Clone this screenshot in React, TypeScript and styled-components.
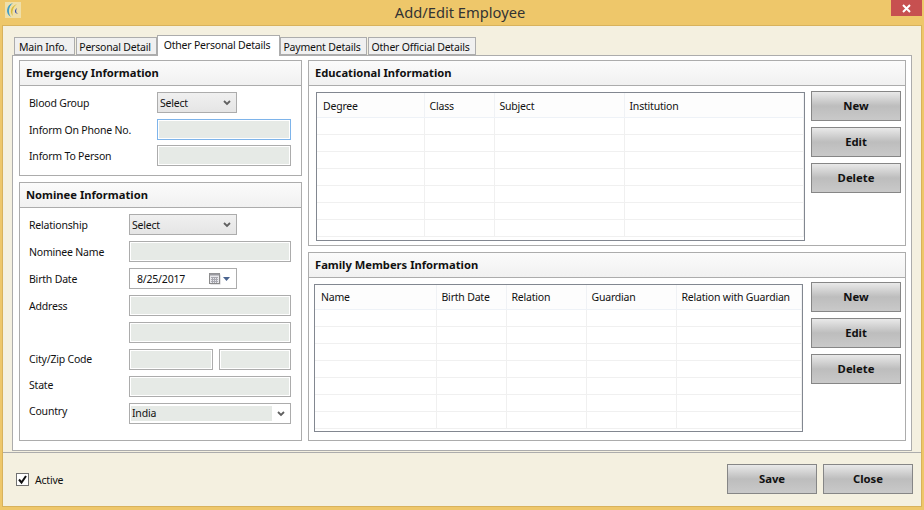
import * as React from 'react';
import styled, { createGlobalStyle } from 'styled-components';

const GlobalStyle = createGlobalStyle`
  html, body {
    margin: 0;
    padding: 0;
    background: #eec76a;
  }
  * {
    box-sizing: border-box;
  }
`;

const Window = styled.div`
  width: 924px;
  height: 510px;
  display: flex;
  flex-direction: column;
  overflow: hidden;
  background: #eec76a;
  font-family: 'Noto Sans', sans-serif;
  font-size: 10.5px;
  letter-spacing: -0.2px;
  color: #111;
`;
const TitleBar = styled.div`
  height: 25px;
  flex-shrink: 0;
  position: relative;
  display: flex;
  align-items: center;
  justify-content: center;
  font-size: 14.7px;
  letter-spacing: 0;
  color: #333;
  padding: 0 4px 1px 0;
`;
const AppIcon = styled.svg`
  position: absolute;
  left: 5px;
  top: 2px;
`;
const CloseBox = styled.div`
  position: absolute;
  left: 891px;
  top: 0;
  width: 31px;
  height: 16px;
  background: #c75050;
  display: flex;
  align-items: center;
  justify-content: center;
`;
const Body = styled.div`
  margin: 0 2px 3px 2px;
  flex: 1;
  border: 1px solid #d8b25c;
  background: #f4f0e0;
  display: flex;
  flex-direction: column;
  min-height: 0;
`;
const TabArea = styled.div`
  margin: 9px 9px 0 9px;
  height: 416px;
  display: flex;
  flex-direction: column;
`;
const TabStrip = styled.div`
  height: 21px;
  display: flex;
  align-items: flex-end;
  padding-left: 2px;
  gap: 1px;
`;
const Tab = styled.div<{ $active?: boolean; $width: number }>`
  width: ${(p) => p.$width}px;
  height: ${(p) => (p.$active ? 21 : 18)}px;
  border: 1px solid #acacac;
  background: ${(p) => (p.$active ? '#fff' : '#f0f0f0')};
  border-bottom: ${(p) => (p.$active ? 'none' : '1px solid #acacac')};
  margin: ${(p) => (p.$active ? '0 -1px -1px -1px' : '0')};
  position: relative;
  z-index: ${(p) => (p.$active ? 2 : 1)};
  display: flex;
  align-items: center;
  justify-content: center;
  padding: ${(p) => (p.$active ? '0 3px 2px 0' : '1px 3px 0 0')};
  white-space: nowrap;
`;
const TabPane = styled.div`
  flex: 1;
  border: 1px solid #acacac;
  background: #fff;
  padding: 4px 5px 9px 6px;
  display: flex;
  gap: 6px;
`;
const LeftColumn = styled.div`
  width: 283px;
  display: flex;
  flex-direction: column;
  gap: 6px;
`;
const RightColumn = styled.div`
  width: 598px;
  display: flex;
  flex-direction: column;
  gap: 6px;
`;
const Panel = styled.section<{ $height: number }>`
  height: ${(p) => p.$height}px;
  border: 1px solid #acacac;
  display: flex;
  flex-direction: column;
`;
const PanelHeader = styled.h2`
  margin: 0;
  height: 25px;
  flex-shrink: 0;
  border-bottom: 1px solid #acacac;
  background: linear-gradient(#fbfbfb, #f1f1f1);
  padding: 0 0 1px 6px;
  display: flex;
  align-items: center;
  font-size: 11.2px;
  letter-spacing: 0;
  font-weight: 700;
  color: #111;
`;
const Form = styled.div`
  padding: 6px 10px 0 9px;
  display: flex;
  flex-direction: column;
  gap: 6px;
`;
const FormRow = styled.div<{ $tight?: boolean }>`
  display: flex;
  height: 21px;
  align-items: center;
  margin-top: ${(p) => (p.$tight ? -1 : 0)}px;
`;
const Label = styled.label<{ $width: number; $raise?: number }>`
  width: ${(p) => p.$width}px;
  flex-shrink: 0;
  padding-bottom: ${(p) => p.$raise ?? 0}px;
`;
const TextField = styled.div<{ $width: number; $focused?: boolean; $gap?: number }>`
  width: ${(p) => p.$width}px;
  height: 21px;
  margin-left: ${(p) => p.$gap ?? 0}px;
  border: 1px solid ${(p) => (p.$focused ? '#7eb4ea' : '#acacac')};
  background: #e6eae6;
  box-shadow: inset 0 0 0 1px #fff;
`;
const SelectBox = styled.div<{ $width: number }>`
  width: ${(p) => p.$width}px;
  height: 21px;
  border: 1px solid #acacac;
  background: linear-gradient(#f0f0f0, #e5e5e5);
  display: flex;
  align-items: center;
  justify-content: space-between;
  padding: 0 5px 0 2px;
`;
const DateBox = styled.div`
  width: 108px;
  height: 21px;
  border: 1px solid #acacac;
  background: #fff;
  display: flex;
  align-items: center;
  justify-content: space-between;
  padding: 0 6px 0 7px;
`;
const DateButton = styled.span`
  display: flex;
  align-items: center;
  gap: 2px;
`;
const ComboBox = styled.div`
  width: 162px;
  height: 21px;
  border: 1px solid #acacac;
  background: #fff;
  display: flex;
  align-items: center;
  justify-content: space-between;
  padding: 2px 5px 2px 1px;
`;
const ComboText = styled.div`
  width: 141px;
  height: 15px;
  background: #e6eae6;
  padding-left: 1px;
  line-height: 15px;
`;
const GridArea = styled.div<{ $left: number; $top: number; $gap: number }>`
  display: flex;
  align-items: flex-start;
  gap: ${(p) => p.$gap}px;
  padding: ${(p) => p.$top}px 0 0 ${(p) => p.$left}px;
`;
const GridFrame = styled.div<{ $height: number }>`
  width: 489px;
  height: ${(p) => p.$height}px;
  border: 1px solid #828790;
  background: #fff;
  overflow: hidden;
  flex-shrink: 0;
`;
const DataGrid = styled.table`
  width: 100%;
  table-layout: fixed;
  border-collapse: collapse;
`;
const HeadCell = styled.th<{ $width?: number; $drop?: number }>`
  width: ${(p) => (p.$width ? `${p.$width}px` : 'auto')};
  height: 24px;
  padding: ${(p) => p.$drop ?? 0}px 0 0 5px;
  text-align: left;
  font-weight: 400;
  background: #fdfdfd;
  border-right: 1px solid #f0f2f5;
  border-bottom: 1px solid #eef2f7;
  &:first-child {
    padding-left: 6px;
  }
`;
const Cell = styled.td`
  height: 17px;
  padding: 0;
  border-right: 1px solid #f0f0f0;
  border-bottom: 1px solid #f0f0f0;
`;
const ButtonColumn = styled.div<{ $offset: number }>`
  display: flex;
  flex-direction: column;
  gap: 6px;
  margin-top: ${(p) => p.$offset}px;
`;
const ActionButton = styled.button`
  width: 90px;
  height: 30px;
  padding: 0 0 2px;
  border: 1px solid #868686;
  background: linear-gradient(#e9e9e9 0%, #bdbdbd 50%, #c9c9c9 100%);
  font-family: 'Noto Sans', sans-serif;
  font-size: 11.3px;
  font-weight: 700;
  color: #111;
`;
const Footer = styled.div`
  flex: 1;
  margin-top: 1px;
  border-top: 1px solid #acacac;
  display: flex;
  align-items: center;
  justify-content: space-between;
  padding: 0 8px 1px 13px;
`;
const ActiveCheck = styled.div`
  display: flex;
  align-items: center;
  gap: 6px;
`;
const ActiveText = styled.span`
  padding-top: 2px;
`;
const CheckBox = styled.div`
  width: 13px;
  height: 13px;
  border: 1px solid #707070;
  background: #fff;
  display: flex;
  align-items: center;
  justify-content: center;
`;
const FooterButtons = styled.div`
  display: flex;
  gap: 6px;
`;

const Chevron = () => (
  <svg width="8" height="6" viewBox="0 0 8 6">
    <path d="M1 1 L4 4 L7 1" fill="none" stroke="#606060" strokeWidth="1.8" />
  </svg>
);

const CalendarIcon = () => (
  <svg width="12" height="12" viewBox="0 0 12 12">
    <rect x="1.5" y="1.5" width="10" height="10" fill="#c8c8cc" />
    <rect x="0.5" y="0.5" width="10" height="10" fill="#e8e8ec" stroke="#8a8a8a" />
    <rect x="0.5" y="0.5" width="10" height="2" fill="#9a9aa0" />
    <path d="M2 4.5h7M2 6.5h7M2 8.5h7M3.5 4v6M5.5 4v6M7.5 4v6" stroke="#a8a8b0" strokeWidth="1" fill="none" />
  </svg>
);

const Grid = ({
  columns,
  height,
  headDrop,
}: {
  columns: { title: string; width?: number }[];
  height: number;
  headDrop?: number;
}) => (
  <GridFrame $height={height}>
    <DataGrid>
      <thead>
        <tr>
          {columns.map((c) => (
            <HeadCell key={c.title} $width={c.width} $drop={headDrop}>
              {c.title}
            </HeadCell>
          ))}
        </tr>
      </thead>
      <tbody>
        {[0, 1, 2, 3, 4, 5, 6].map((row) => (
          <tr key={row}>
            {columns.map((c) => (
              <Cell key={c.title} />
            ))}
          </tr>
        ))}
      </tbody>
    </DataGrid>
  </GridFrame>
);

const GridButtons = ({ offset }: { offset: number }) => (
  <ButtonColumn $offset={offset}>
    <ActionButton>New</ActionButton>
    <ActionButton>Edit</ActionButton>
    <ActionButton>Delete</ActionButton>
  </ButtonColumn>
);

const educationColumns = [
  { title: 'Degree', width: 107 },
  { title: 'Class', width: 70 },
  { title: 'Subject', width: 130 },
  { title: 'Institution' },
];

const familyColumns = [
  { title: 'Name', width: 121 },
  { title: 'Birth Date', width: 70 },
  { title: 'Relation', width: 80 },
  { title: 'Guardian', width: 90 },
  { title: 'Relation with Guardian' },
];

export default function App() {
  return (
    <>
      <GlobalStyle />
      <Window>
        <TitleBar>
          <AppIcon width="16" height="16" viewBox="0 0 16 16">
            <rect width="16" height="16" fill="#efdfa8" />
            <path d="M8 1 C1 3 0 12 6 15 C3 11 3 5 8 1 Z" fill="#3f9cc4" />
            <path d="M12 2 C6 4 4 10 8 14 C6.500 10 8 5 12 2 Z" fill="#d9bd3a" />
            <path d="M12 6 C9 8 9 12 14 12 C11 11.500 10.500 9 12 6 Z" fill="#3f55a8" />
          </AppIcon>
          Add/Edit Employee
          <CloseBox>
            <svg width="9" height="9" viewBox="0 0 9 9">
              <path d="M1 1 L8 8 M8 1 L1 8" stroke="#fff" strokeWidth="2" />
            </svg>
          </CloseBox>
        </TitleBar>
        <Body>
          <TabArea>
            <TabStrip>
              <Tab $width={61}>Main Info.</Tab>
              <Tab $width={81}>Personal Detail</Tab>
              <Tab $width={123} $active>
                Other Personal Details
              </Tab>
              <Tab $width={87}>Payment Details</Tab>
              <Tab $width={108}>Other Official Details</Tab>
            </TabStrip>
            <TabPane>
              <LeftColumn>
                <Panel $height={116}>
                  <PanelHeader>Emergency Information</PanelHeader>
                  <Form>
                    <FormRow>
                      <Label $width={128}>Blood Group</Label>
                      <SelectBox $width={80}>
                        Select
                        <Chevron />
                      </SelectBox>
                    </FormRow>
                    <FormRow>
                      <Label $width={128}>Inform On Phone No.</Label>
                      <TextField $width={134} $focused />
                    </FormRow>
                    <FormRow $tight>
                      <Label $width={128}>Inform To Person</Label>
                      <TextField $width={134} />
                    </FormRow>
                  </Form>
                </Panel>
                <Panel $height={259}>
                  <PanelHeader>Nominee Information</PanelHeader>
                  <Form>
                    <FormRow>
                      <Label $width={100}>Relationship</Label>
                      <SelectBox $width={108}>
                        Select
                        <Chevron />
                      </SelectBox>
                    </FormRow>
                    <FormRow>
                      <Label $width={100}>Nominee Name</Label>
                      <TextField $width={162} />
                    </FormRow>
                    <FormRow>
                      <Label $width={100}>Birth Date</Label>
                      <DateBox>
                        8/25/2017
                        <DateButton>
                          <CalendarIcon />
                          <svg width="7" height="4" viewBox="0 0 7 4">
                            <path d="M0 0 H7 L3.5 4 Z" fill="#4a6490" />
                          </svg>
                        </DateButton>
                      </DateBox>
                    </FormRow>
                    <FormRow>
                      <Label $width={100}>Address</Label>
                      <TextField $width={162} />
                    </FormRow>
                    <FormRow>
                      <Label $width={100} />
                      <TextField $width={162} />
                    </FormRow>
                    <FormRow>
                      <Label $width={100} $raise={2}>City/Zip Code</Label>
                      <TextField $width={84} />
                      <TextField $width={72} $gap={6} />
                    </FormRow>
                    <FormRow>
                      <Label $width={100} $raise={4}>State</Label>
                      <TextField $width={162} />
                    </FormRow>
                    <FormRow>
                      <Label $width={100} $raise={6}>Country</Label>
                      <ComboBox>
                        <ComboText>India</ComboText>
                        <Chevron />
                      </ComboBox>
                    </FormRow>
                  </Form>
                </Panel>
              </LeftColumn>
              <RightColumn>
                <Panel $height={186}>
                  <PanelHeader>Educational Information</PanelHeader>
                  <GridArea $left={7} $top={6} $gap={6}>
                    <Grid columns={educationColumns} height={149} headDrop={2} />
                    <GridButtons offset={-1} />
                  </GridArea>
                </Panel>
                <Panel $height={189}>
                  <PanelHeader>Family Members Information</PanelHeader>
                  <GridArea $left={5} $top={6} $gap={8}>
                    <Grid columns={familyColumns} height={148} />
                    <GridButtons offset={-2} />
                  </GridArea>
                </Panel>
              </RightColumn>
            </TabPane>
          </TabArea>
          <Footer>
            <ActiveCheck>
              <CheckBox>
                <svg width="11" height="11" viewBox="0 0 11 11">
                  <path d="M2 5.500 L4.500 8.500 L9 2" fill="none" stroke="#111" strokeWidth="2" />
                </svg>
              </CheckBox>
              <ActiveText>Active</ActiveText>
            </ActiveCheck>
            <FooterButtons>
              <ActionButton>Save</ActionButton>
              <ActionButton>Close</ActionButton>
            </FooterButtons>
          </Footer>
        </Body>
      </Window>
    </>
  );
}
